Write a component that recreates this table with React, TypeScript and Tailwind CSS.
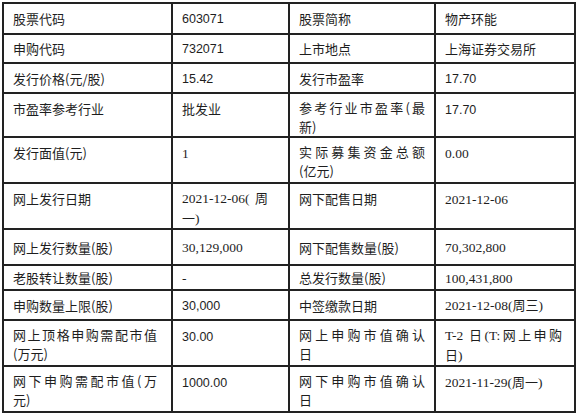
import type { ReactNode } from 'react';

const cjk = '[font-family:"Noto_Sans_CJK_SC","Noto_Sans",sans-serif] text-[13px]';
const serif = '[font-family:"Liberation_Serif","Noto_Sans_CJK_SC",serif] text-[13.5px]';
const sans = '[font-family:"Liberation_Sans","Noto_Sans_CJK_SC",sans-serif] text-[12.5px]';

// first line of a wrapped cell, spread edge to edge like the justified source
function Spread({ w, children }: { w: string; children: ReactNode }) {
  return <span className={`block whitespace-nowrap text-justify [text-align-last:justify] ${w}`}>{children}</span>;
}

type Row = {
  h: string;
  multi?: boolean;
  cells: ReactNode[];
};

const rows: Row[] = [
  {
    h: 'h-[31px]',
    cells: [
      <span className={cjk}>股票代码</span>,
      <span className={sans}>603071</span>,
      <span className={cjk}>股票简称</span>,
      <span className={cjk}>物产环能</span>,
    ],
  },
  {
    h: 'h-[29px]',
    cells: [
      <span className={cjk}>申购代码</span>,
      <span className={sans}>732071</span>,
      <span className={cjk}>上市地点</span>,
      <span className={cjk}>上海证券交易所</span>,
    ],
  },
  {
    h: 'h-[30px]',
    cells: [
      <span className={cjk}>发行价格(元/股)</span>,
      <span className={sans}>15.42</span>,
      <span className={cjk}>发行市盈率</span>,
      <span className={sans}>17.70</span>,
    ],
  },
  {
    h: 'h-[44px]',
    multi: true,
    cells: [
      <span className={cjk}>市盈率参考行业</span>,
      <span className={cjk}>批发业</span>,
      <span className={cjk}>
        <Spread w="w-[126px]">参考行业市盈率(最</Spread>
        新)
      </span>,
      <span className={sans}>17.70</span>,
    ],
  },
  {
    h: 'h-[46px]',
    multi: true,
    cells: [
      <span className={cjk}>发行面值(元)</span>,
      <span className={serif}>1</span>,
      <span className={cjk}>
        <Spread w="w-[126px]">实际募集资金总额</Spread>
        (亿元)
      </span>,
      <span className={serif}>0.00</span>,
    ],
  },
  {
    h: 'h-[46px]',
    multi: true,
    cells: [
      <span className={cjk}>网上发行日期</span>,
      <span className={serif}>
        <Spread w="w-[86px]">
          2021-12-06(<span className={cjk}> 周</span>
        </Spread>
        <span className={cjk}>一</span>)
      </span>,
      <span className={cjk}>网下配售日期</span>,
      <span className={serif}>2021-12-06</span>,
    ],
  },
  {
    h: 'h-[36px]',
    cells: [
      <span className={cjk}>网上发行数量(股)</span>,
      <span className={serif}>30,129,000</span>,
      <span className={cjk}>网下配售数量(股)</span>,
      <span className={serif}>70,302,800</span>,
    ],
  },
  {
    h: 'h-[25px]',
    cells: [
      <span className={cjk}>老股转让数量(股)</span>,
      <span className={serif}>-</span>,
      <span className={cjk}>总发行数量(股)</span>,
      <span className={serif}>100,431,800</span>,
    ],
  },
  {
    h: 'h-[30px]',
    cells: [
      <span className={cjk}>申购数量上限(股)</span>,
      <span className={sans}>30,000</span>,
      <span className={cjk}>中签缴款日期</span>,
      <span className={serif}>
        2021-12-08(<span className={cjk}>周三</span>)
      </span>,
    ],
  },
  {
    h: 'h-[46px]',
    multi: true,
    cells: [
      <span className={cjk}>
        <Spread w="w-[144px]">网上顶格申购需配市值</Spread>
        (万元)
      </span>,
      <span className={sans}>30.00</span>,
      <span className={cjk}>
        <Spread w="w-[126px]">网上申购市值确认</Spread>
        日
      </span>,
      <span className={serif}>
        <Spread w="w-[117px]">
          T-2 <span className={cjk}>日</span>(T:<span className={cjk}>网上申购</span>
        </Spread>
        <span className={cjk}>日</span>)
      </span>,
    ],
  },
  {
    h: 'h-[46px]',
    multi: true,
    cells: [
      <span className={cjk}>
        <Spread w="w-[144px]">网下申购需配市值(万</Spread>
        元)
      </span>,
      <span className={sans}>1000.00</span>,
      <span className={cjk}>
        <Spread w="w-[126px]">网下申购市值确认</Spread>
        日
      </span>,
      <span className={serif}>
        2021-11-29(<span className={cjk}>周一</span>)
      </span>,
    ],
  },
];

export default function App() {
  return (
    <div className="w-[576px] h-[418px] bg-white pl-[2px] pt-[2px]">
      <table className="table-fixed border-collapse border-2 border-[#222] w-[572px] text-[#1e1e1e]">
        <colgroup>
          <col className="w-[169px]" />
          <col className="w-[117px]" />
          <col className="w-[146px]" />
          <col className="w-[140px]" />
        </colgroup>
        <tbody>
          {rows.map((row, i) => (
            <tr key={i} className={row.h}>
              {row.cells.map((cell, j) => (
                <td
                  key={j}
                  className={`border-2 border-[#222] pl-[9px] pr-[4px] ${
                    row.multi ? 'align-top pt-[5px] leading-[18px]' : 'align-middle leading-[19px]'
                  }`}
                >
                  {cell}
                </td>
              ))}
            </tr>
          ))}
        </tbody>
      </table>
    </div>
  );
}
